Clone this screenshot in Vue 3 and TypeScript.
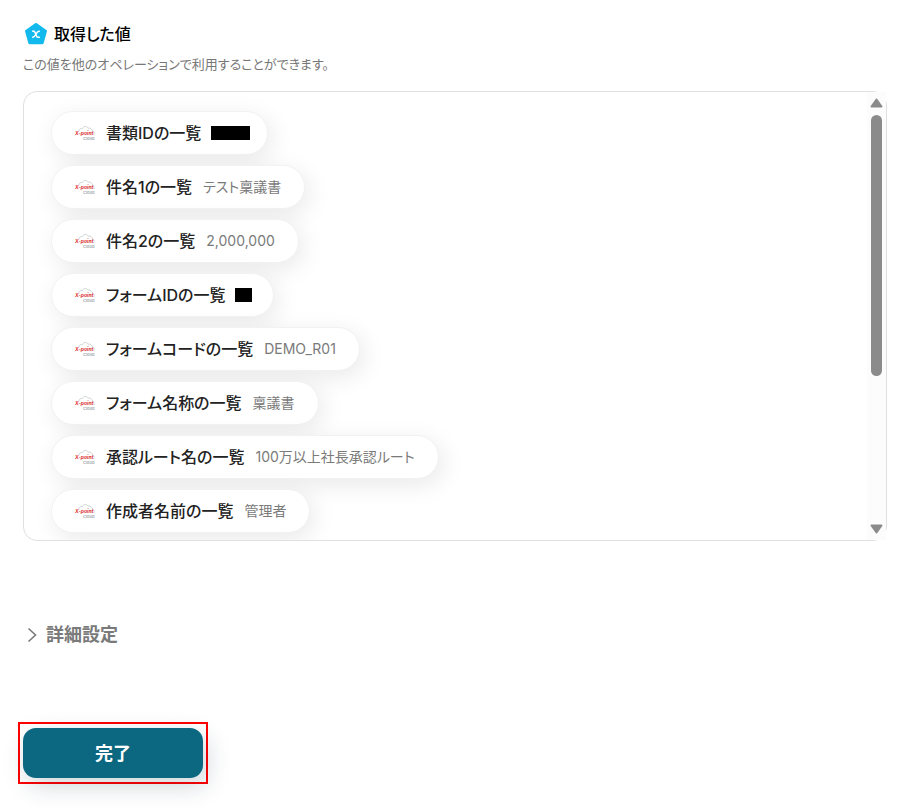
<script setup lang="ts">
import { ref } from 'vue'

interface Output {
  label: string
  value?: string
  mask?: { slot: number; bar: number }
}

const outputs: Output[] = [
  { label: '書類IDの一覧', mask: { slot: 33, bar: 39 } },
  { label: '件名1の一覧', value: 'テスト稟議書' },
  { label: '件名2の一覧', value: '2,000,000' },
  { label: 'フォームIDの一覧', mask: { slot: 15, bar: 17 } },
  { label: 'フォームコードの一覧', value: 'DEMO_R01' },
  { label: 'フォーム名称の一覧', value: '稟議書' },
  { label: '承認ルート名の一覧', value: '100万以上社長承認ルート' },
  { label: '作成者名前の一覧', value: '管理者' },
]

const list = ref<HTMLElement | null>(null)

function scrollStep(direction: number) {
  list.value?.scrollBy({ top: direction * 54 })
}
</script>

<template>
  <main class="page">
    <header class="head">
      <svg class="badge" viewBox="0 0 24 24" aria-hidden="true">
        <path d="M12 2.500 21.500 9.200 18.200 20.800H5.800L2.500 9.200Z" fill="#12b9ec" stroke="#12b9ec" stroke-width="3" stroke-linejoin="round" />
        <path d="M8.700 9.200C10 8.900 10.600 9.300 11.100 10.500L12.700 14.200C13.100 15.300 13.900 15.600 15.300 15.200M15.300 9.200C13.600 9 13 10.300 12 12.200S10.300 15.300 8.700 15.200" fill="none" stroke="#fff" stroke-width="1.500" stroke-linecap="round" />
      </svg>
      <h1 class="title">取得した値</h1>
    </header>
    <p class="lead">この値を他のオペレーションで利用することができます。</p>

    <section class="panel">
      <ul ref="list" class="list">
        <li v-for="item in outputs" :key="item.label" class="chip">
          <svg class="logo" viewBox="0 0 20 16" aria-hidden="true">
            <path d="M4 6C4 3.800 6 3.200 7.400 3.600 8.400 1 12 .8 13.200 3.200 15.500 2.600 17 4 17 5.500 19 6 19.500 8 18.700 10" fill="none" stroke="#cfd4d7" stroke-width="1" />
            <text class="brand" x="0" y="10">X-point</text>
            <text class="brand-sub" x="8" y="15">Cloud</text>
          </svg>
          <span class="label">{{ item.label }}</span>
          <span v-if="item.value" class="value">{{ item.value }}</span>
          <span v-else-if="item.mask" class="slot" :style="{ width: item.mask.slot + 'px' }">
            <span class="mask" :style="{ width: item.mask.bar + 'px' }"></span>
          </span>
        </li>
      </ul>
      <div class="scrollbar">
        <button class="arrow" type="button" aria-label="上へ" @click="scrollStep(-1)">
          <svg viewBox="0 0 13 10"><path d="M6.500 1.500 11.500 8.500H1.500Z" fill="#8b8b8b" stroke="#8b8b8b" stroke-width="2" stroke-linejoin="round" /></svg>
        </button>
        <div class="track"><div class="thumb"></div></div>
        <button class="arrow" type="button" aria-label="下へ" @click="scrollStep(1)">
          <svg viewBox="0 0 13 10"><path d="M6.500 8.500 11.500 1.500H1.500Z" fill="#8b8b8b" stroke="#8b8b8b" stroke-width="2" stroke-linejoin="round" /></svg>
        </button>
      </div>
    </section>

    <button class="details" type="button">
      <svg class="chevron" viewBox="0 0 10 16" aria-hidden="true"><path d="M1.500 1.500 8.500 8 1.500 14.500" fill="none" stroke="#7a7a7a" stroke-width="1.600" /></svg>
      詳細設定
    </button>

    <div class="focus">
      <button class="done" type="button">完了</button>
    </div>
  </main>
</template>

<style>
body {
  margin: 0;
  background: #fff;
}
</style>

<style scoped>
.page {
  padding: 22px 25px 24px 23px;
  font-family: Inter, "Noto Sans CJK JP", sans-serif;
  font-feature-settings: "palt";
  color: #222;
}
button {
  font: inherit;
  border: 0;
  background: none;
  padding: 0;
  cursor: pointer;
}
.head {
  display: flex;
  align-items: center;
  gap: 6px;
  height: 24px;
  padding-left: 1px;
}
.badge {
  width: 24px;
  height: 24px;
}
.title {
  margin: 0;
  font-size: 16px;
  line-height: 24px;
  font-weight: 500;
  color: #000;
}
.lead {
  margin: 8px 0 17px;
  font-size: 13px;
  line-height: 20px;
  color: #777;
}
.panel {
  display: flex;
  height: 448px;
  border: 1px solid #e0e0e0;
  border-radius: 14px;
}
.list {
  flex: 1;
  min-width: 0;
  display: flex;
  flex-direction: column;
  align-items: flex-start;
  gap: 10px;
  margin: 0;
  padding: 19px 27px;
  overflow: hidden;
  border-radius: 13px;
  list-style: none;
}
.chip {
  display: flex;
  flex: none;
  align-items: center;
  box-sizing: border-box;
  height: 44px;
  padding: 0 23px;
  border: 1px solid #f2f2f2;
  border-radius: 22px;
  background: #fff;
  box-shadow: 4px 6px 24px rgba(0, 0, 0, 0.09);
  white-space: nowrap;
}
.logo {
  width: 20px;
  height: 16px;
  margin-right: 11px;
  overflow: visible;
}
.brand {
  font: italic 700 5px Inter, sans-serif;
  fill: #dc3030;
}
.brand-sub {
  font: 700 4px Inter, sans-serif;
  fill: #a9b0b5;
}
.label {
  font-size: 16px;
  line-height: 24px;
  font-weight: 500;
}
.value {
  margin-left: 11px;
  font-size: 14px;
  line-height: 20px;
  color: #7a7a7a;
}
.slot {
  display: flex;
  margin-left: 10px;
}
.mask {
  flex: none;
  height: 14px;
  background: #000;
}
.scrollbar {
  flex: none;
  display: flex;
  flex-direction: column;
  align-items: center;
  width: 19px;
  background: #fcfcfc;
}
.arrow {
  flex: none;
  display: flex;
  align-items: center;
  width: 13px;
  height: 22px;
}
.arrow svg {
  width: 13px;
  height: 10px;
}
.track {
  flex: 1;
  width: 11px;
  padding: 1px 0;
}
.thumb {
  height: 65%;
  border-radius: 6px;
  background: #8b8b8b;
}
.details {
  display: flex;
  align-items: center;
  gap: 9px;
  margin: 80px 0 74px 4px;
  font-size: 18px;
  line-height: 27px;
  font-weight: 700;
  color: #7a7a7a;
}
.chevron {
  width: 10px;
  height: 16px;
}
.focus {
  width: fit-content;
  margin-left: -5px;
  padding: 4px 3px;
  border: 2px solid #f00;
}
.done {
  display: block;
  width: 180px;
  height: 50px;
  padding-bottom: 2px;
  border-radius: 13px;
  background: #0b6880;
  box-shadow: 4px 8px 24px rgba(20, 50, 70, 0.2);
  font-size: 18px;
  font-weight: 700;
  color: #fff;
}
</style>
